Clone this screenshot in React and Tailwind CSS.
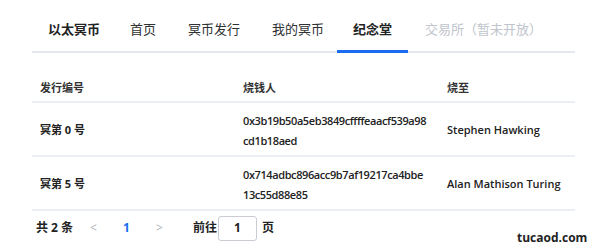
export default function App() {
  const font = { fontFamily: '"Open Sans", "Noto Sans CJK SC", sans-serif' };
  const rows = [
    { id: "冥第 0 号", addr: ["0x3b19b50a5eb3849cffffeaacf539a98", "cd1b18aed"], to: "Stephen Hawking" },
    { id: "冥第 5 号", addr: ["0x714adbc896acc9b7af19217ca4bbe", "13c55d88e85"], to: "Alan Mathison Turing" },
  ];
  return (
    <div className="w-[600px] h-[250px] bg-white relative overflow-hidden text-[#303133]" style={font}>
      <div className="mx-[32px] w-[543px] h-[53px] border-b-2 border-[#e4e7ed] flex items-end text-[13px]">
        <div className="w-[98px] h-[51px] flex items-center pt-[8px] pl-[16px] font-bold text-[#222]">以太冥币</div>
        <div className="w-[58px] h-[51px] flex items-center pt-[8px] text-[#303133]">首页</div>
        <div className="w-[84px] h-[51px] flex items-center pt-[8px] text-[#303133]">冥币发行</div>
        <div className="w-[65px] h-[51px] flex items-center pt-[8px] text-[#303133]">我的冥币</div>
        <div className="w-[71px] h-[53px] flex items-center justify-center font-bold text-[#222] border-b-[3px] border-[#1a6cf0] -mb-[2px] pt-[10px]">纪念堂</div>
        <div className="h-[51px] flex items-center pt-[8px] pl-[17px] text-[#c0c4cc]">交易所（暂未开放）</div>
      </div>
      <div className="mx-[32px] w-[543px] text-[11px]">
        <div className="flex h-[50px] items-end pb-[5px] border-b-2 border-[#ebeef5] font-bold text-[#333]">
          <div className="w-[203px] pl-[8px]">发行编号</div>
          <div className="w-[204px] pl-[8px]">烧钱人</div>
          <div className="flex-1 pl-[8px]">烧至</div>
        </div>
        {rows.map((r, i) => (
          <div key={i} className="flex h-[54px] items-center border-b-2 border-[#ebeef5] text-[#222]">
            <div className="w-[203px] pl-[8px] font-bold pt-[2px]">{r.id}</div>
            <div className="w-[204px] pl-[8px] leading-[20px] text-[11px] font-semibold text-[#222] tracking-[-0.4px] pt-[4px]">
              <div>{r.addr[0]}</div>
              <div>{r.addr[1]}</div>
            </div>
            <div className="flex-1 pl-[8px] font-semibold pt-[2px]">{r.to}</div>
          </div>
        ))}
      </div>
      <div className="flex items-center h-[30px] ml-[36px] mt-[2px] text-[12px] text-[#222]">
        <span className="font-bold w-[54px]">共 2 条</span>
        <span className="w-[33px] text-[#b0b4bc]">&lt;</span>
        <span className="w-[33px] text-[#1a6cf0] font-bold">1</span>
        <span className="w-[37px] text-[#b0b4bc]">&gt;</span>
        <span className="font-bold">前往</span>
        <div className="w-[39px] h-[25px] border border-[#c9ccd3] rounded-[3px] flex items-center justify-center font-bold ml-[1px]">1</div>
        <span className="font-bold ml-[5px]">页</span>
      </div>
      <div className="absolute left-[517px] top-[229px] text-[12px] font-bold text-[#222]">tucaod.com</div>
    </div>
  );
}
